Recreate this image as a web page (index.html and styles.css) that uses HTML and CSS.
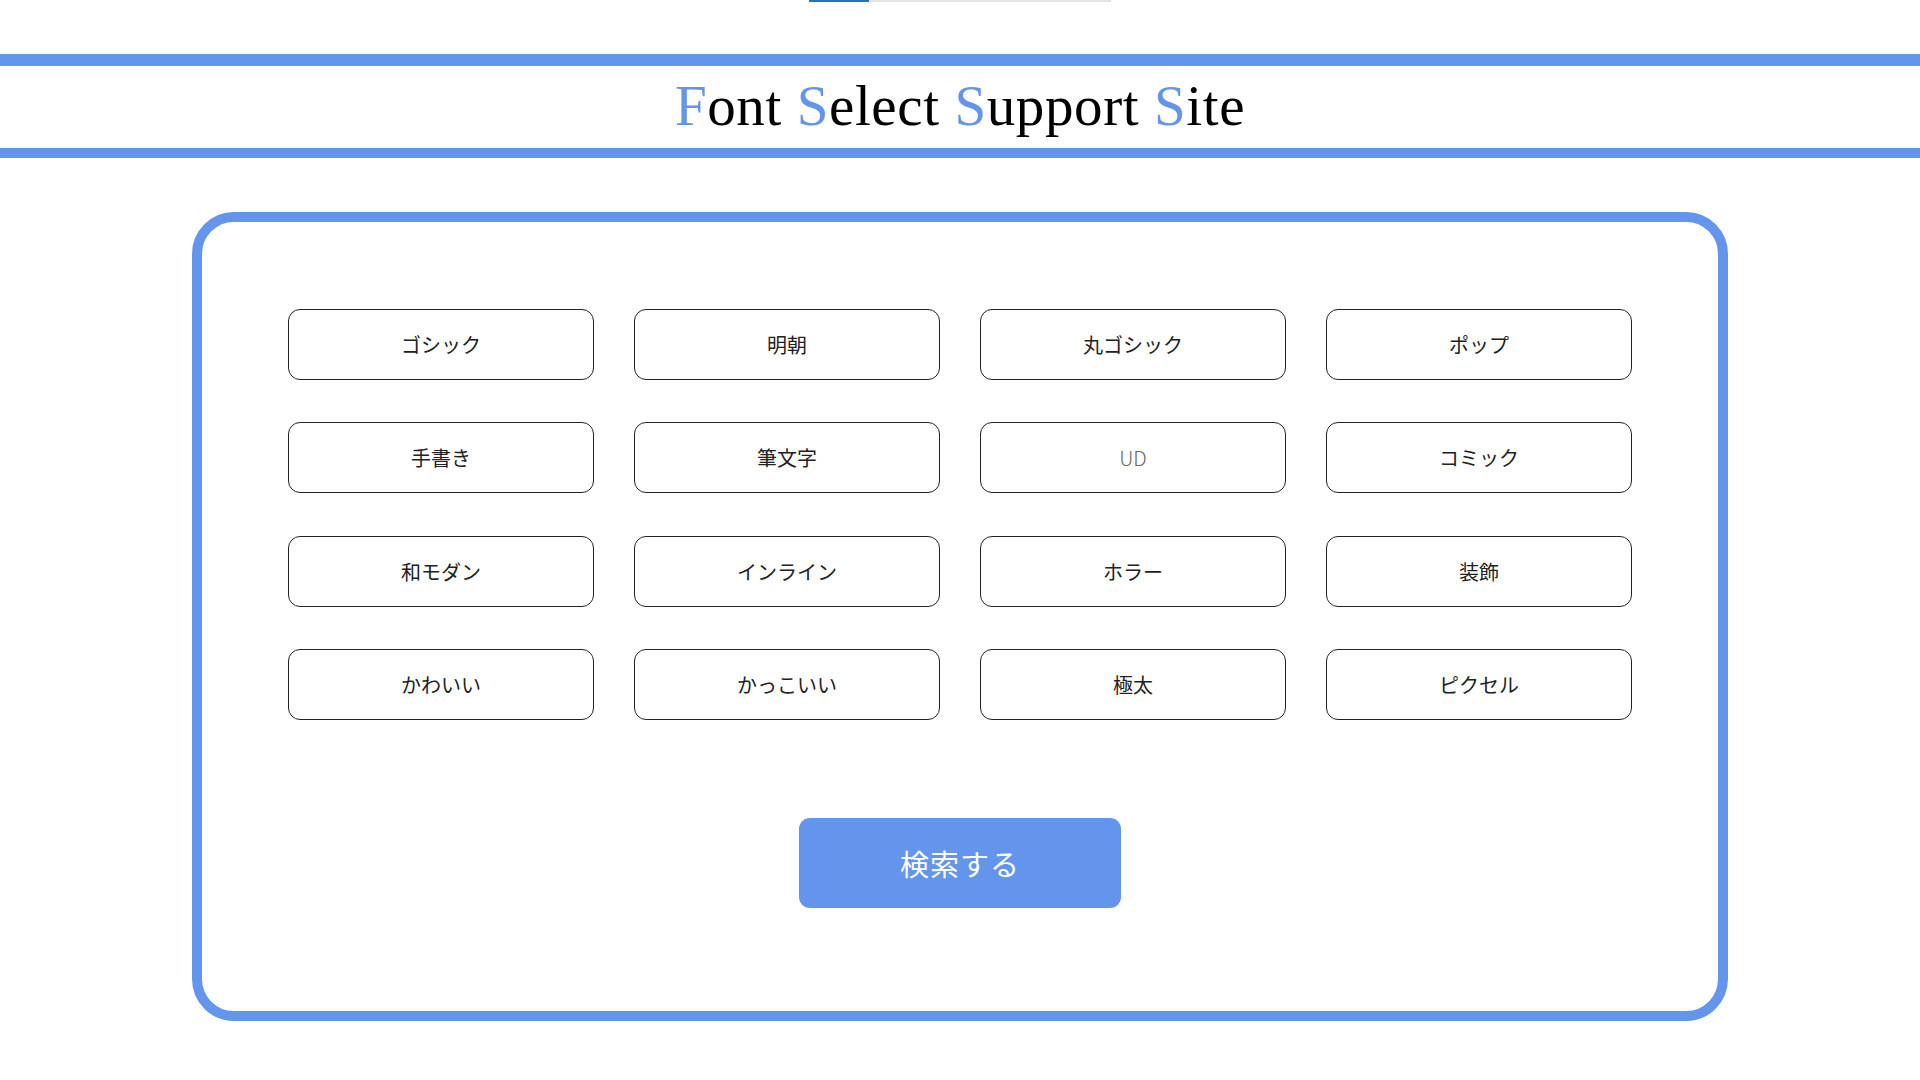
FILE: index.html
```html
<!DOCTYPE html>
<html lang="ja">
<head>
<meta charset="utf-8">
<title>Font Select Support Site</title>
<link rel="stylesheet" href="styles.css">
</head>
<body>
  <div class="progress"><div class="progress-fill"></div></div>
  <header class="site-header">
    <h1 class="site-title"><span class="accent">F</span>ont <span class="accent">S</span>elect <span class="accent">S</span>upport <span class="accent">S</span>ite</h1>
  </header>
  <main class="panel">
    <div class="choice-grid">
      <button class="choice">ゴシック</button>
      <button class="choice">明朝</button>
      <button class="choice">丸ゴシック</button>
      <button class="choice">ポップ</button>
      <button class="choice">手書き</button>
      <button class="choice">筆文字</button>
      <button class="choice choice-latin">UD</button>
      <button class="choice">コミック</button>
      <button class="choice">和モダン</button>
      <button class="choice">インライン</button>
      <button class="choice">ホラー</button>
      <button class="choice">装飾</button>
      <button class="choice">かわいい</button>
      <button class="choice">かっこいい</button>
      <button class="choice">極太</button>
      <button class="choice">ピクセル</button>
    </div>
    <div class="search-row">
      <button class="search-btn">検索する</button>
    </div>
  </main>
</body>
</html>
```

FILE: styles.css
```css
* {
  box-sizing: border-box;
}

html, body {
  margin: 0;
  padding: 0;
  background: #ffffff;
}

body {
  font-family: "Noto Sans CJK JP", "Noto Sans", sans-serif;
  color: #222222;
  width: 1920px;
}

.progress {
  width: 302px;
  height: 2px;
  margin: 0 auto;
  background: #e3e3e3;
  display: flex;
}

.progress-fill {
  width: 60px;
  height: 100%;
  background: #1f74c6;
}

.site-header {
  margin-top: 52px;
  border-top: 12px solid #6495ed;
  border-bottom: 10px solid #6495ed;
  height: 104px;
  display: flex;
  align-items: center;
  justify-content: center;
}

.site-title {
  margin: 0;
  font-family: "Liberation Serif", "Times New Roman", serif;
  font-weight: 400;
  font-size: 57px;
  letter-spacing: 0.6px;
  line-height: 1;
  color: #000000;
  padding-bottom: 3px;
}

.accent {
  color: #6495ed;
}

.panel {
  width: 1536px;
  margin: 54px auto 0;
  border: 10px solid #6495ed;
  border-radius: 42px;
  padding: 86.5px 86px 103px;
}

.choice-grid {
  display: grid;
  grid-template-columns: repeat(4, 306px);
  column-gap: 40px;
  row-gap: 42.5px;
}

.choice {
  height: 71px;
  border: 1px solid #222222;
  border-radius: 12px;
  background: #ffffff;
  font-family: "Noto Sans CJK JP", "Noto Sans", sans-serif;
  font-size: 20px;
  color: #222222;
  padding: 0;
  display: flex;
  align-items: center;
  justify-content: center;
}

.choice-latin {
  color: #666666;
  font-weight: 300;
}

.search-row {
  display: flex;
  justify-content: center;
  margin-top: 98px;
}

.search-btn {
  width: 322px;
  height: 90px;
  border: none;
  border-radius: 11px;
  background: #6495ed;
  color: #ffffff;
  font-family: "Noto Sans CJK JP", "Noto Sans", sans-serif;
  font-size: 29px;
  letter-spacing: 1px;
  padding: 0;
}
```
